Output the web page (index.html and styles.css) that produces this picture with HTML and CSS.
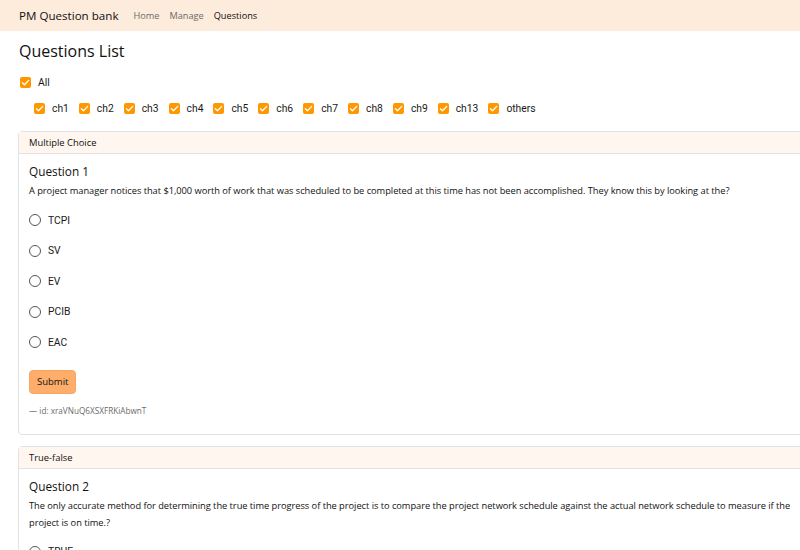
FILE: index.html
```html
<!DOCTYPE html>
<html>
<head>
<meta charset="utf-8">
<link rel="stylesheet" href="styles.css">
</head>
<body>
<nav class="navbar">
  <span class="brand">PM Question bank</span>
  <a class="nav-link">Home</a>
  <a class="nav-link">Manage</a>
  <a class="nav-link active">Questions</a>
</nav>
<main class="container">
  <h2 class="title">Questions List</h2>
  <label class="check all"><span class="box"><svg viewBox="0 0 12 12"><path d="M2.6 6.2l2.3 2.3 4.6-4.8" fill="none" stroke="#fff" stroke-width="1.4" stroke-linecap="round" stroke-linejoin="round"/></svg></span>All</label>
  <div class="chapters">
    <label class="check"><span class="box"><svg viewBox="0 0 12 12"><path d="M2.6 6.2l2.3 2.3 4.6-4.8" fill="none" stroke="#fff" stroke-width="1.4" stroke-linecap="round" stroke-linejoin="round"/></svg></span>ch1</label>
    <label class="check"><span class="box"><svg viewBox="0 0 12 12"><path d="M2.6 6.2l2.3 2.3 4.6-4.8" fill="none" stroke="#fff" stroke-width="1.4" stroke-linecap="round" stroke-linejoin="round"/></svg></span>ch2</label>
    <label class="check"><span class="box"><svg viewBox="0 0 12 12"><path d="M2.6 6.2l2.3 2.3 4.6-4.8" fill="none" stroke="#fff" stroke-width="1.4" stroke-linecap="round" stroke-linejoin="round"/></svg></span>ch3</label>
    <label class="check"><span class="box"><svg viewBox="0 0 12 12"><path d="M2.6 6.2l2.3 2.3 4.6-4.8" fill="none" stroke="#fff" stroke-width="1.4" stroke-linecap="round" stroke-linejoin="round"/></svg></span>ch4</label>
    <label class="check"><span class="box"><svg viewBox="0 0 12 12"><path d="M2.6 6.2l2.3 2.3 4.6-4.8" fill="none" stroke="#fff" stroke-width="1.4" stroke-linecap="round" stroke-linejoin="round"/></svg></span>ch5</label>
    <label class="check"><span class="box"><svg viewBox="0 0 12 12"><path d="M2.6 6.2l2.3 2.3 4.6-4.8" fill="none" stroke="#fff" stroke-width="1.4" stroke-linecap="round" stroke-linejoin="round"/></svg></span>ch6</label>
    <label class="check"><span class="box"><svg viewBox="0 0 12 12"><path d="M2.6 6.2l2.3 2.3 4.6-4.8" fill="none" stroke="#fff" stroke-width="1.4" stroke-linecap="round" stroke-linejoin="round"/></svg></span>ch7</label>
    <label class="check"><span class="box"><svg viewBox="0 0 12 12"><path d="M2.6 6.2l2.3 2.3 4.6-4.8" fill="none" stroke="#fff" stroke-width="1.4" stroke-linecap="round" stroke-linejoin="round"/></svg></span>ch8</label>
    <label class="check"><span class="box"><svg viewBox="0 0 12 12"><path d="M2.6 6.2l2.3 2.3 4.6-4.8" fill="none" stroke="#fff" stroke-width="1.4" stroke-linecap="round" stroke-linejoin="round"/></svg></span>ch9</label>
    <label class="check"><span class="box"><svg viewBox="0 0 12 12"><path d="M2.6 6.2l2.3 2.3 4.6-4.8" fill="none" stroke="#fff" stroke-width="1.4" stroke-linecap="round" stroke-linejoin="round"/></svg></span>ch13</label>
    <label class="check"><span class="box"><svg viewBox="0 0 12 12"><path d="M2.6 6.2l2.3 2.3 4.6-4.8" fill="none" stroke="#fff" stroke-width="1.4" stroke-linecap="round" stroke-linejoin="round"/></svg></span>others</label>
  </div>

  <section class="card">
    <div class="card-header">Multiple Choice</div>
    <div class="card-body">
      <h5 class="q-title">Question 1</h5>
      <p class="q-text">A project manager notices that $1,000 worth of work that was scheduled to be completed at this time has not been accomplished. They know this by looking at the?</p>
      <ul class="options">
        <li class="option"><span class="radio"></span>TCPI</li>
        <li class="option"><span class="radio"></span>SV</li>
        <li class="option"><span class="radio"></span>EV</li>
        <li class="option"><span class="radio"></span>PCIB</li>
        <li class="option"><span class="radio"></span>EAC</li>
      </ul>
      <button class="submit">Submit</button>
      <div class="q-id">— id: xraVNuQ6XSXFRKiAbwnT</div>
    </div>
  </section>

  <section class="card">
    <div class="card-header">True-false</div>
    <div class="card-body">
      <h5 class="q-title">Question 2</h5>
      <p class="q-text">The only accurate method for determining the true time progress of the project is to compare the project network schedule against the actual network schedule to measure if the project is on time.?</p>
      <ul class="options">
        <li class="option"><span class="radio"></span>TRUE</li>
        <li class="option"><span class="radio"></span>FALSE</li>
      </ul>
    </div>
  </section>
</main>
</body>
</html>
```

FILE: styles.css
```css
html, body {
  margin: 0;
  padding: 0;
  overflow: hidden;
  background: #fff;
}
body {
  font-family: "Open Sans", "Noto Sans", sans-serif;
  font-size: 9.3px;
  color: #111;
  width: 800px;
}
.navbar {
  height: 31px;
  background: #fdebdc;
  display: flex;
  align-items: center;
  padding-left: 19px;
  box-sizing: border-box;
}
.brand {
  font-size: 11.6px;
  line-height: 16px;
  color: #111;
  margin-right: 15px;
}
.nav-link {
  font-size: 9.2px;
  line-height: 14px;
  color: #6b6b6b;
  margin-right: 10px;
}
.nav-link.active {
  color: #111;
}
.container {
  padding-left: 18px;
}
.title {
  font-size: 16px;
  font-weight: 400;
  margin: 8px 0 0 1px;
  line-height: 24px;
  color: #111;
}
.check {
  display: flex;
  align-items: center;
  font-family: Roboto, "Liberation Sans", sans-serif;
  font-size: 10.3px;
  color: #1a1a1a;
}
.box {
  width: 11px;
  height: 11px;
  background: #ff9800;
  border-radius: 2px;
  display: inline-flex;
  margin-right: 7px;
}
.box svg {
  width: 11px;
  height: 11px;
}
.all {
  margin: 13px 0 0 2px;
  height: 13px;
}
.chapters {
  display: flex;
  padding-left: 16px;
  margin-top: 13px;
  height: 13px;
}
.chapters .check {
  margin-right: 10px;
}
.card {
  width: 800px;
  border: 1px solid #e2e2e2;
  border-radius: 4px;
  margin-top: 16px;
}
.card + .card {
  margin-top: 11px;
}
.card-header {
  background: #fff6ef;
  border-bottom: 1px solid #e2e2e2;
  height: 21px;
  line-height: 22px;
  padding-left: 10px;
  font-size: 9.4px;
  color: #111;
}
.card-body {
  padding: 8px 10px 17px 10px;
}
.q-title {
  font-size: 11.8px;
  font-weight: 400;
  margin: 0 0 2px 0;
  line-height: 18px;
  color: #111;
}
.q-text {
  margin: 0;
  font-size: 9.3px;
  line-height: 17px;
  letter-spacing: -0.04px;
  color: #111;
}
.options {
  list-style: none;
  margin: 6px 0 0 0;
  padding: 0;
}
.option {
  display: flex;
  align-items: center;
  height: 30.5px;
  font-family: Roboto, "Liberation Sans", sans-serif;
  font-size: 10.3px;
  color: #1a1a1a;
}
.radio {
  width: 10px;
  height: 10px;
  border: 1.3px solid #555;
  border-radius: 50%;
  margin-right: 7px;
}
.submit {
  display: block;
  margin-top: 12px;
  background: #ffad6b;
  border: 1px solid #f9a460;
  border-radius: 4px;
  font-family: "Open Sans", "Noto Sans", sans-serif;
  font-size: 9.5px;
  color: #111;
  padding: 0 7px;
  height: 24px;
}
.q-id {
  margin-top: 11px;
  font-size: 8.2px;
  line-height: 12px;
  color: #6b6b6b;
}
```
